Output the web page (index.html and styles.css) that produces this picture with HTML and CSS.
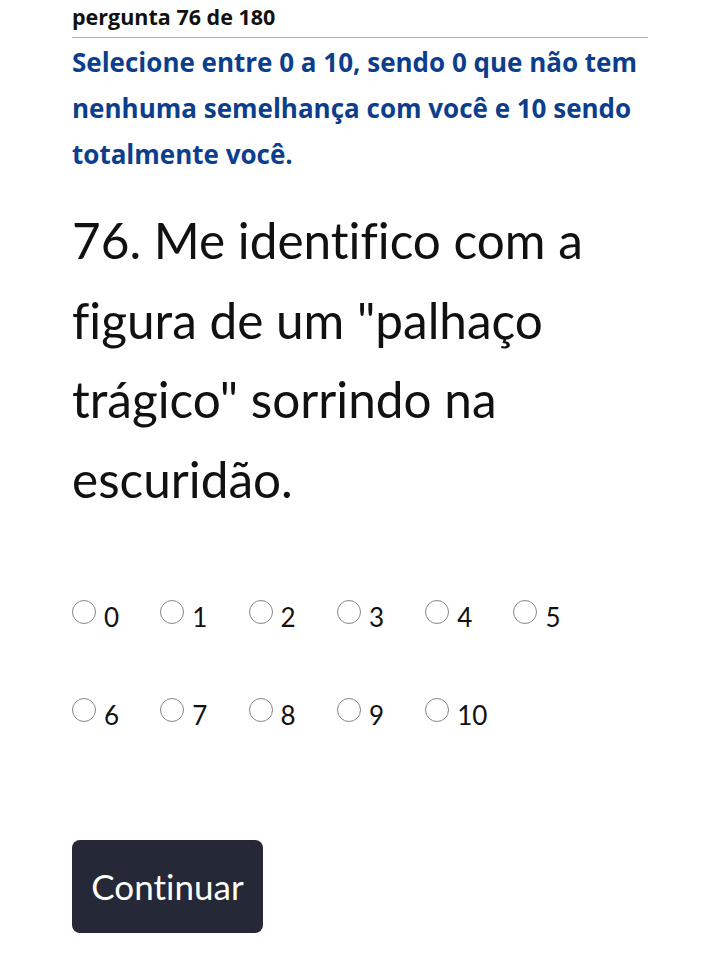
FILE: index.html
```html
<!DOCTYPE html>
<html lang="pt-BR">
<head>
<meta charset="utf-8">
<title>Pergunta 76 de 180</title>
<link rel="stylesheet" href="styles.css">
</head>
<body>
<main class="page">
  <header class="progress">pergunta 76 de 180</header>
  <p class="instructions">Selecione entre 0 a 10, sendo 0 que não tem nenhuma semelhança com você e 10 sendo totalmente você.</p>
  <h1 class="question">76. Me identifico com a figura de um "palhaço trágico" sorrindo na escuridão.</h1>
  <form class="scale">
    <div class="options">
      <label class="option"><span class="dot"></span><span class="num">0</span></label>
      <label class="option"><span class="dot"></span><span class="num">1</span></label>
      <label class="option"><span class="dot"></span><span class="num">2</span></label>
      <label class="option"><span class="dot"></span><span class="num">3</span></label>
      <label class="option"><span class="dot"></span><span class="num">4</span></label>
      <label class="option"><span class="dot"></span><span class="num">5</span></label>
      <label class="option"><span class="dot"></span><span class="num">6</span></label>
      <label class="option"><span class="dot"></span><span class="num">7</span></label>
      <label class="option"><span class="dot"></span><span class="num">8</span></label>
      <label class="option"><span class="dot"></span><span class="num">9</span></label>
      <label class="option"><span class="dot"></span><span class="num">10</span></label>
    </div>
    <button type="button" class="continue">Continuar</button>
  </form>
</main>
</body>
</html>
```
FILE: styles.css
```css
html, body {
  margin: 0;
  padding: 0;
  background: #ffffff;
}

.page {
  padding: 0 58px 0 72px;
  font-family: Lato, "Open Sans", sans-serif;
  font-variant-ligatures: none;
  color: #111111;
}

.progress {
  font-family: "Open Sans", sans-serif;
  font-weight: 700;
  font-size: 21.5px;
  line-height: 28px;
  padding: 3px 0 6px;
  border-bottom: 1px solid #adadad;
  color: #111111;
}

.instructions {
  margin: 1px 0 0;
  font-family: "Open Sans", sans-serif;
  font-weight: 700;
  font-size: 26px;
  line-height: 46px;
  color: #0c3e8c;
}

.question {
  margin: 24px 0 0;
  font-family: Lato, sans-serif;
  font-weight: 400;
  font-size: 49.5px;
  line-height: 79.5px;
  color: #111111;
}

.scale {
  margin: 81px 0 0;
}

.options {
  display: grid;
  grid-template-columns: repeat(6, 88.3px);
  row-gap: 66px;
}

.option {
  display: flex;
  align-items: flex-start;
  height: 32px;
  font-family: Lato, sans-serif;
  font-size: 26px;
  line-height: 30px;
  color: #111111;
}

.dot {
  box-sizing: border-box;
  display: block;
  width: 24px;
  height: 24px;
  min-width: 24px;
  border: 1.5px solid #858585;
  border-radius: 50%;
  background: #ffffff;
  flex: none;
}

.num {
  margin: 2px 0 0 8px;
}

.continue {
  display: flex;
  align-items: center;
  justify-content: center;
  margin-top: 110px;
  width: 191px;
  height: 93px;
  padding: 0;
  border: none;
  border-radius: 8px;
  background: #252836;
  color: #ffffff;
  font-family: Lato, sans-serif;
  font-variant-ligatures: none;
  font-size: 35px;
  line-height: 1;
}
```
